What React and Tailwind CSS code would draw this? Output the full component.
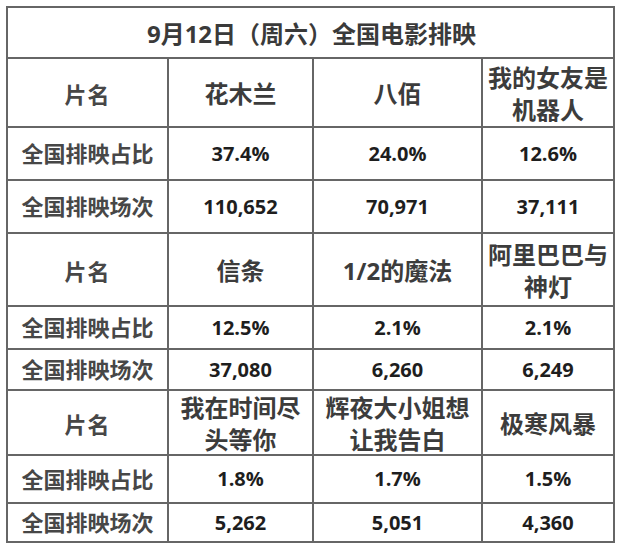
import React from "react";

const rows = [
  {
    h: "h-[69px]",
    names: ["花木兰", "八佰", ["我的女友是", "机器人"]],
    pct: ["37.4%", "24.0%", "12.6%"],
    cnt: ["110,652", "70,971", "37,111"],
    ph: "h-[53px]",
    ch: "h-[53px]",
  },
  {
    h: "h-[73px]",
    names: ["信条", "1/2的魔法", ["阿里巴巴与", "神灯"]],
    pct: ["12.5%", "2.1%", "2.1%"],
    cnt: ["37,080", "6,260", "6,249"],
    ph: "h-[43px]",
    ch: "h-[41px]",
  },
  {
    h: "h-[65px]",
    names: [["我在时间尽", "头等你"], ["辉夜大小姐想", "让我告白"], "极寒风暴"],
    pct: ["1.8%", "1.7%", "1.5%"],
    cnt: ["5,262", "5,051", "4,360"],
    ph: "h-[48px]",
    ch: "h-[39px]",
  },
];

const cjk = { fontFamily: '"Open Sans", "Noto Sans CJK SC", sans-serif' };

function Cell({ h, children, className = "" }) {
  return (
    <div
      className={`${h} border-r-2 border-b-2 border-[#666666] flex flex-col items-center justify-center text-center ${className}`}
    >
      {children}
    </div>
  );
}

function Name({ v }) {
  if (Array.isArray(v)) {
    return (
      <div className="flex flex-col items-center leading-[32px] pt-[2px]">
        <span>{v[0]}</span>
        <span>{v[1]}</span>
      </div>
    );
  }
  return <span className="pt-[2px]">{v}</span>;
}

export default function App() {
  return (
    <div className="w-[620px] h-[545px] bg-white pt-[6px] pl-[6px]" style={cjk}>
      <div className="grid grid-cols-[161px_145px_169px_132px] w-[609px] border-l-2 border-t-2 border-[#666666]">
        <div className="col-span-4 h-[51px] border-r-2 border-b-2 border-[#666666] flex items-center justify-center pl-[2px] pt-[3px] text-[24px] font-bold text-[#3a3a3a]">
          9月12日（周六）全国电影排映
        </div>
        {rows.map((r, i) => (
          <React.Fragment key={i}>
            <Cell h={r.h} className="text-[22px] font-bold text-[#474747]">
              <span className="tracking-[1px] pt-[3px]">片名</span>
            </Cell>
            {r.names.map((n, j) => (
              <Cell key={j} h={r.h} className="text-[24px] font-bold text-[#3c3c3c]">
                <Name v={n} />
              </Cell>
            ))}
            <Cell h={r.ph} className="text-[22px] font-bold text-[#474747]">
              <span>全国排映占比</span>
            </Cell>
            {r.pct.map((n, j) => (
              <Cell key={j} h={r.ph} className="text-[20px] font-bold text-[#1e1e1e]">
                <span>{n}</span>
              </Cell>
            ))}
            <Cell h={r.ch} className="text-[22px] font-bold text-[#474747]">
              <span>全国排映场次</span>
            </Cell>
            {r.cnt.map((n, j) => (
              <Cell key={j} h={r.ch} className="text-[20px] font-bold text-[#1e1e1e]">
                <span>{n}</span>
              </Cell>
            ))}
          </React.Fragment>
        ))}
      </div>
    </div>
  );
}
